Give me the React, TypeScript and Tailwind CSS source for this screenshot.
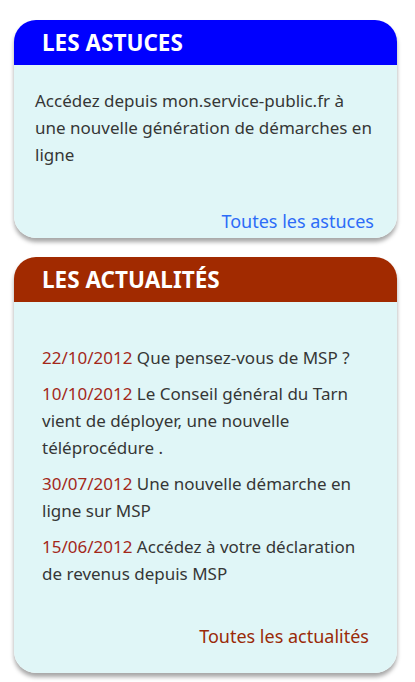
export default function App() {
  return (
    <div className="min-h-screen bg-white px-[14px] pt-5 pb-2 text-[17px] text-[#363636] [font-family:'Noto_Sans',sans-serif]">
      {/* Les astuces */}
      <div className="w-[383px] rounded-[22px] shadow-[0_4px_4px_rgba(0,0,0,0.35)]">
        <div className="flex h-[45px] items-center rounded-t-[22px] bg-[#0000ff] pl-7">
          <h2 className="text-[22.5px] font-bold text-white">LES ASTUCES</h2>
        </div>
        <div className="flex flex-col rounded-b-[22px] bg-[#e0f6f7] px-[21px] pt-[22px] pb-[3px]">
          <p className="leading-[27px]">
            Accédez depuis mon.service-public.fr à une nouvelle génération de démarches en ligne
          </p>
          <a className="mt-[40px] self-end pr-[2px] text-[18px] leading-[27px] text-[#2d6cf7]">Toutes les astuces</a>
        </div>
      </div>

      {/* Les actualités */}
      <div className="mt-[19px] w-[383px] rounded-[22px] shadow-[0_4px_4px_rgba(0,0,0,0.35)]">
        <div className="flex h-[45px] items-center rounded-t-[22px] bg-[#a12a00] pl-7">
          <h2 className="text-[22.5px] font-bold text-white">LES ACTUALITÉS</h2>
        </div>
        <div className="flex flex-col rounded-b-[22px] bg-[#e0f6f7] px-[28px] pt-[42px] pb-[23px]">
          <ul className="flex flex-col gap-[9px] leading-[27px]">
            <li>
              <span className="text-[#a3281a]">22/10/2012</span> Que pensez-vous de MSP ?
            </li>
            <li>
              <span className="text-[#a3281a]">10/10/2012</span> Le Conseil général du Tarn vient de déployer, une nouvelle téléprocédure .
            </li>
            <li>
              <span className="text-[#a3281a]">30/07/2012</span> Une nouvelle démarche en ligne sur MSP
            </li>
            <li>
              <span className="text-[#a3281a]">15/06/2012</span> Accédez à votre déclaration de revenus depuis MSP
            </li>
          </ul>
          <a className="mt-[36px] self-end text-[18px] leading-[27px] text-[#9a2a08]">Toutes les actualités</a>
        </div>
      </div>
    </div>
  );
}
